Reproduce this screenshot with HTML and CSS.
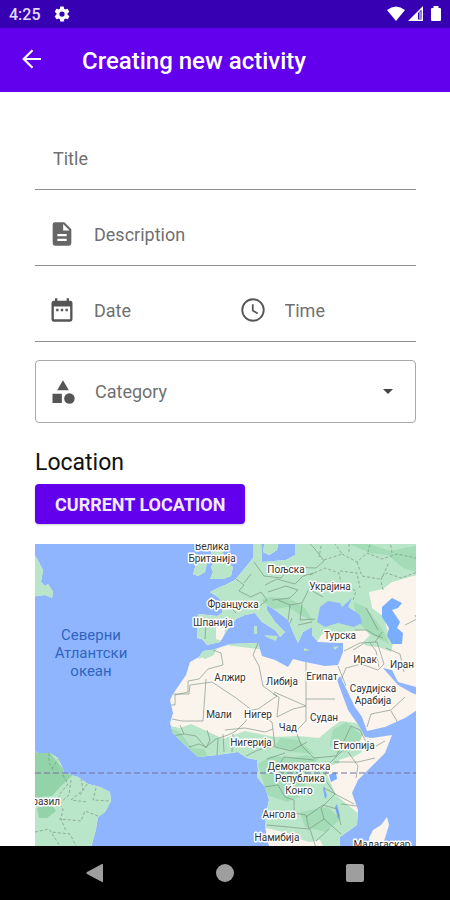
FILE: index.html
```html
<!DOCTYPE html>
<html lang="en">
<head>
    <meta charset="UTF-8">
    <meta name="viewport" content="width=device-width, initial-scale=1.0">
    <title>Creating new activity</title>
    <link rel="stylesheet" href="styles.css">
</head>
<body>

    <div class="status-bar">
        <span class="clock">4:25</span>
        <svg class="gear" viewBox="0 0 24 24" width="18" height="18"><path fill="#fff" d="M19.4 13a7.500 7.500 0 0 0 0-2l2.100-1.600c.2-.2.3-.4.1-.7l-2-3.400c-.1-.2-.4-.3-.6-.2l-2.500 1a7.300 7.300 0 0 0-1.700-1l-.4-2.600A.5.5 0 0 0 14 2h-4a.5.5 0 0 0-.5.4L9.200 5.100c-.6.2-1.200.6-1.700 1L5 5.100c-.2-.1-.5 0-.6.2l-2 3.400c-.1.300-.1.500.1.700L4.600 11a8 8 0 0 0 0 2l-2.100 1.600c-.2.200-.2.400-.1.700l2 3.400c.1.200.4.300.6.200l2.500-1c.5.400 1.100.7 1.700 1l.4 2.600c0 .3.2.5.5.5h4c.2 0 .5-.2.5-.4l.4-2.700c.6-.2 1.200-.6 1.700-1l2.500 1c.2.1.5 0 .6-.2l2-3.400c.1-.2.1-.5-.1-.7zM12 15.500a3.500 3.500 0 1 1 0-7 3.500 3.500 0 0 1 0 7z"/></svg>
        <div class="status-icons">
            <svg viewBox="0 0 18 16" width="18" height="16"><path fill="#fff" d="M0 4Q9-3 18 4L9 15z"/></svg>
            <svg viewBox="0 0 16 16" width="16" height="16"><path fill="#fff" fill-rule="evenodd" d="M0 15L15 0v15zM10 7v6.500h3.500V3.500z"/><path fill="#fff" d="M11.500 5.500h1V13h-1z"/></svg>
            <svg viewBox="0 0 12 16" width="12" height="16"><path fill="#fff" d="M3.500 0h5v2H10q1 0 1 1v11q0 1-1 1H2q-1 0-1-1V3q0-1 1-1h1.500z"/></svg>
        </div>
    </div>

    <header class="app-bar">
        <button class="back" type="button" aria-label="Back">
            <svg viewBox="0 0 20 20" width="20" height="20"><path fill="none" stroke="#fff" stroke-width="2.200" d="M19 10H2M10.500 1.200L1.700 10l8.800 8.800"/></svg>
        </button>
        <h1>Creating new activity</h1>
    </header>

    <main>
        <form class="activity-form">
            <div class="row">
                <label class="field">
                    <input type="text" placeholder="Title" aria-label="Title">
                </label>
            </div>
            <div class="row">
                <label class="field">
                    <svg viewBox="0 0 24 24" width="28" height="28"><path fill="#666" d="M14 2H6a2 2 0 0 0-2 2v16c0 1.100.9 2 2 2h12a2 2 0 0 0 2-2V8zm2 16H8v-2h8zm0-4H8v-2h8zm-3-5V3.500L18.500 9z"/></svg>
                    <input type="text" placeholder="Description" aria-label="Description">
                </label>
            </div>
            <div class="row">
                <label class="field">
                    <svg viewBox="0 0 24 24" width="28" height="28"><path fill="#555" d="M9 11H7v2h2zm4 0h-2v2h2zm4 0h-2v2h2zm2-7h-1V2h-2v2H8V2H6v2H5c-1.100 0-2 .9-2 2v14c0 1.100.9 2 2 2h14a2 2 0 0 0 2-2V6a2 2 0 0 0-2-2zm0 16H5V9h14z"/></svg>
                    <input type="text" placeholder="Date" aria-label="Date">
                </label>
                <label class="field">
                    <svg viewBox="0 0 24 24" width="28" height="28"><circle cx="12" cy="12" r="9.200" fill="none" stroke="#555" stroke-width="1.600"/><path fill="none" stroke="#555" stroke-width="1.500" d="M11.800 7v5.500l4.200 2.500"/></svg>
                    <input type="text" placeholder="Time" aria-label="Time">
                </label>
            </div>
            <label class="field outlined">
                <svg viewBox="0 0 24 24" width="28" height="28"><path fill="#555" d="M12 2l5 8.500H7zM3 13.500h8v8H3z"/><circle cx="17.500" cy="17.500" r="4.500" fill="#555"/></svg>
                <select aria-label="Category">
                    <option>Category</option>
                </select>
                <svg class="arrow" viewBox="0 0 12 6" width="12" height="6"><path fill="#444" d="M1 0h10L6 5z"/></svg>
            </label>

            <h2>Location</h2>
            <button class="location-btn" type="button">CURRENT LOCATION</button>
        </form>

        <svg class="map" viewBox="35 544 381 302" preserveAspectRatio="xMinYMin slice">
            <defs>
                <path id="land" d="
                    M30 552L36 557 43 570 41 582 45 586 48 584 53 592 52 598 45 595 30 597z
                    M30 748L38 753 50 753 58 758 63 769 64 773 78 777 88 784 100 787 110 792 111 801 105 812 98 817 96 829 91 848H30z
                    M193 574l3-10 7-4 4 3-2 9-7 4z
                    M210 579l3-7-2-5 3-6-3-6 1-14h9l2 12 5 10 5 4-2 9-8 3z
                    M253 540L253 558 245 568 235 580 225 585 220 587 210 592 219 598 223 604 222 613 217 616 198 614 197 638 202 639 207 645 220 642 226 632 236 619 245 615 255 613 262 622 275 630 280 637 285 632 275 622 267 610 267 605 275 610 288 620 293 632 298 643 303 632 312 627 312 635 318 642 343 643 343 652 338 665 325 666 305 662 293 659 288 667 275 660 262 656 258 643 230 644 212 650 203 651 199 657 190 662 186 675 173 694 170 700 173 713 170 723 173 733 183 743 198 757 217 755 238 752 247 758 257 760 258 770 257 777 265 787 269 800 265 817 265 827 270 850 340 850 340 837 357 825 358 810 352 793 358 780 375 763 385 753 392 735 372 738 365 737 357 723 348 710 337 680 340 676 355 707 362 717 367 731 385 727 405 718 420 708 420 696 412 693 398 685 383 668 392 670 398 682 420 688 420 540 295 540 295 555 286 560 262 562 261 540z
                    M370 848l-1-10 4-8 8-5 6-8 2 8-4 13-4 11z
                    M265 540h14l-2 10-8 5-6-3z"/>
                <clipPath id="land-clip"><use href="#land"/></clipPath>
            </defs>
            <rect x="35" y="544" width="381" height="302" fill="#8fb5ff"/>
            <use href="#land" fill="#faf4ec"/>

            <!-- vegetation -->
            <g clip-path="url(#land-clip)">
                <path fill="#b9e5c8" d="M30 540h30v65H30zM30 745h90v105H30zM190 540h230v34l-28 8-9 7-14 3 3 16 12 9 5 20 4 6-2 9-12-5-12-1-10-6-20-3-12-2-6 7-8-2-1 15-85-10-26 14z"/>
                <path fill="#faf4ec" d="M216 625l9 4-1 13-8-3zM322 634l43-4 5 5-8 8-45-1z"/>
                <path fill="#b9e5c8" d="M200 656l10-6 6-1-2 6-9 4zM257 642l5 3-2 5zM165 725l15 3 11-4 20 9 12 6 22-8 30 6 22-1 22 2 13-11 9-6 15 2 11 9-10 8 5 12-15 9-15 4-5 10 9 20 24 20-5 45h-25l-10-20-10 2-18-5-40-4z"/>
                <path fill="#93d3a9" d="M30 748l20 5 12 15 11 7-13 12-8 9-22 2zM37 808l14-4 5 7-9 7h-8z"/>
                <path fill="#a3dcb6" d="M168 728l12 4 12 16 12 1 4 8-13 2-25-24zM258 764l13-8 20 2 15-3 13 3-12 16-4 21-16 7-20-7zM333 730l13-8 16 13-4 13-20 6-8-9zM300 812l27-5 14 12-16 13-20-5z"/>
                <path fill="#a3dcb6" d="M261 600l9-3 20 2 14 8 10 15-12-6-14-9-15 2zM280 738l19 2 15 14-19-2-20-5zM354 602l13 6 17 24 5 12-19-10-14-14zM340 540l30 4 20 7 30-6v28l-17-5-15-13-18-2z"/>
                <path fill="#faf4ec" d="M339 760l12-4 6 6-9 14-7-2zM266 828l22 5 12 20h-34zM375 831l6-2 1 9-5 1zM341 790l4-2 1 5-4 2z"/>
            </g>

            <!-- seas and lakes -->
            <path fill="#8fb5ff" d="M317 622l3-15 8-6 12 2 2 4 10-9-4 9 12 8 2 8-8 4-16-4-13 4z"/>
            <path fill="#79adff" d="M382 607l10-9 10 5-4 5-6 2 8 12-3 6 6 5-1 11h-10l-5-8 2-8-7-11zM329 775l7-3 1 7-6 3zM324 786l3 10-2 3-2-10zM337 804l3 12-2 3-3-12z"/>
            <path fill="#b9e5c8" d="M254 626h3v8h-3zM265 635l13 1-2 5-10-4zM304 648l6 2-6 1zM333 647l6-1-4 4z"/>

            <!-- country borders -->
            <g class="borders" clip-path="url(#land-clip)">
                <path d="M213 650l8 3 2 12-15 4-9 10-11 2M173 694h16l1-9 22-3 24 16 21 16M188 681v11l-13 3v10h-4M206 679l-3 42h-21l-10-2M258 643l-5 12 6 11 4 20 14 10-19 13-13 2 1 10-10 10-8 4-12 4-10 8-7-3-10 3M306 662v44l-32-14M306 699h29M257 714l15 8 3 24-17 4-12 6M225 730l20-2 20 4 8-3M206 748l4-8-3-10M217 755l1-16M224 752l-1-18M232 752l1-18M180 725l4 9-12 2M184 734l12 2 10 12"/>
                <path d="M273 694l6 3-2 20 16-8 13-3v15l-10 10 5 14 13 13 22-2 7-13 8-17 9 4 6 12M275 747l16 4 16-9M267 759l18-6M267 770l11-3 6-10 30 3M263 787l15-2 7 12 9 3v13l-29-1M294 813l12 2 3 14-42-4M309 829l15-10-3-11 14-14-11-16 5-14 13-13M324 788l30 16M324 819l17 15M306 817l17-12 14 4 4 16M310 829l6 19M334 762h24l17-4M348 752l10 14-2 12M385 741l-16 9-10-2M341 804l16 2M329 829l-13 12"/>
                <path d="M344 651l16-8 17-1 7 22-6 6-17-6-15 4-5 12M370 643l6 8 3 16M353 650l10-6M338 666l8 20M367 727l4-13 20-4 14-13M391 711l7 12M386 648l14 6 4 18M366 608l12 22M355 630l12 0 8 5 8 3M375 642l7-10"/>
                <path d="M236 579l8 6-5 6 12 6 10-5 6 8-12 10M224 600l12 13M201 620l5 1-1 18M244 583l7-9M254 562l10 14 17 2 10-11 25 1 8-7-9-12-8-8M265 585l12-6 18 5 8-8 11-3M268 592l18-6 12 4-8 8-18 2M278 600l12 5 12-2 7-14 14 8M290 605l-2 16M302 604l-2 16 15-1M292 618l-5 12M298 625l14-3"/>
                <path stroke-dasharray="3 2" d="M310 575l15-7 14 5 2 10 15 8-3 9M324 560l18-6-9-13M342 554l15 8 10-9 15 6 15-5 23 5M357 562l5 14 17 3 8-6 14 5 19-7M383 590l-2-9M349 544v10M371 540l-3 12M390 540l2 13M381 580l8-18M340 571l17 2 3 15M322 541l-3 16"/>
                <path d="M405 625l12-6-2-4"/>
                <path stroke-dasharray="3 2" d="M63 775l5 9-8 10-3 8 6 7-2 10 5 12M71 780l-2 15-9 8M81 778l2 12-12 10 16 2M87 784l-7 11M96 788l-3 12 17 1M98 816l-13-5-4 10-22-2M35 832l14-3 11 17M77 848l-7-14-19-2M49 753v10l5 8M59 758l-8 12"/>
            </g>
            <path class="equator" d="M35 773h381"/>

            <g class="ocean">
                <text x="91" y="640">Северни</text>
                <text x="91" y="658">Атлантски</text>
                <text x="91" y="676">океан</text>
            </g>
            <g class="countries">
                <text x="212" y="550">Велика</text>
                <text x="212" y="562">Британија</text>
                <text x="286" y="573">Пољска</text>
                <text x="330" y="590">Украјина</text>
                <text x="233" y="608">Француска</text>
                <text x="213" y="626">Шпанија</text>
                <text x="340" y="639">Турска</text>
                <text x="365" y="663">Ирак</text>
                <text x="402" y="668">Иран</text>
                <text x="230" y="681">Алжир</text>
                <text x="282" y="685">Либија</text>
                <text x="322" y="680">Египат</text>
                <text x="373" y="692">Саудијска</text>
                <text x="373" y="704">Арабија</text>
                <text x="219" y="718">Мали</text>
                <text x="258" y="718">Нигер</text>
                <text x="324" y="721">Судан</text>
                <text x="288" y="731">Чад</text>
                <text x="251" y="746">Нигерија</text>
                <text x="354" y="749">Етиопија</text>
                <text x="299" y="770">Демократска</text>
                <text x="300" y="782">Република</text>
                <text x="299" y="794">Конго</text>
                <text x="279" y="818">Ангола</text>
                <text x="277" y="841">Намибија</text>
                <text x="382" y="848">Мадагаскар</text>
                <text x="43" y="805">Бразил</text>
            </g>
        </svg>
    </main>

    <nav class="nav-bar">
        <button type="button" aria-label="Back"><svg viewBox="0 0 20 20" width="20" height="20"><path fill="#9e9e9e" d="M17 1q1-.5 1 1v16q0 1.500-1 1L2 11q-1.200-1 0-2z"/></svg></button>
        <button type="button" aria-label="Home"><svg viewBox="0 0 20 20" width="20" height="20"><circle cx="10" cy="10" r="9" fill="#9e9e9e"/></svg></button>
        <button type="button" aria-label="Recent apps"><svg viewBox="0 0 20 20" width="20" height="20"><rect x="1" y="1" width="18" height="18" rx="2" fill="#9e9e9e"/></svg></button>
    </nav>

</body>
</html>
```

FILE: styles.css
```css
* { box-sizing: border-box; }

body {
    margin: 0;
    height: 100vh;
    display: flex;
    flex-direction: column;
    background: #fff;
    font-family: Roboto, "Noto Sans", sans-serif;
}

svg { display: block; flex-shrink: 0; }
button { border: none; cursor: pointer; font-family: inherit; }

/* System status bar */
.status-bar {
    height: 28px;
    flex-shrink: 0;
    display: flex;
    align-items: center;
    gap: 12px;
    padding: 0 8px 0 9px;
    background: #3700b3;
    color: #e4dcff;
}
.clock { font-size: 16px; font-weight: 500; }
.status-icons { display: flex; gap: 2px; margin-left: auto; }
.status-icons svg:first-child { margin-right: 1px; }
.status-icons svg:last-child { margin-left: 4px; }

/* App bar */
.app-bar {
    height: 64px;
    flex-shrink: 0;
    display: flex;
    align-items: center;
    gap: 40px;
    padding: 2px 22px 0;
    background: #6200ee;
    color: #fff;
}
.back { padding: 0; background: none; margin-bottom: 4px; }
h1 { margin: 0; font-size: 24px; font-weight: 500; }

main {
    flex: 1;
    min-height: 0;
    display: flex;
    flex-direction: column;
    padding: 35px 34px 0 35px;
}
.activity-form { flex-shrink: 0; }

/* Form fields */
.row {
    display: flex;
    height: 63px;
    margin-bottom: 13px;
    border-bottom: 1px solid #8f8f8f;
}
.field {
    flex: 1;
    min-width: 0;
    display: flex;
    align-items: center;
    gap: 18px;
    padding: 0 13px;
}
.row:first-child .field { padding-left: 18px; }
.field input, .field select {
    flex: 1;
    min-width: 0;
    height: 100%;
    padding: 0;
    border: none;
    outline: none;
    background: none;
    appearance: none;
    font-family: inherit;
    font-size: 18px;
    color: #707070;
}
.field input::placeholder { color: #707070; }
.outlined {
    height: 63px;
    margin-top: 18px;
    border: 1px solid #a8a8a8;
    border-radius: 4px;
}
.outlined .arrow { margin-right: 8px; }

h2 {
    margin: 26px 0 8px;
    font-size: 23px;
    line-height: 27px;
    font-weight: 400;
    color: #111;
}
.location-btn {
    height: 40px;
    padding: 0 20px;
    border-radius: 4px;
    background: #6200ee;
    color: #f1e9ff;
    font-size: 18px;
    font-weight: 700;
    box-shadow: 0 1px 2px rgba(0, 0, 0, 0.2);
}

/* Map */
.map {
    flex: 1;
    min-height: 0;
    width: 100%;
    margin-top: 20px;
    text-anchor: middle;
}
.borders { fill: none; stroke: #738b7b; stroke-width: 1px; stroke-opacity: 0.6; }
.equator { stroke: #74719e; stroke-width: 1px; stroke-dasharray: 6 3; }
.ocean { font-size: 15px; fill: #2f65bd; }
.countries {
    font-size: 10px;
    fill: #333;
    stroke: #fff;
    stroke-width: 3px;
    stroke-linejoin: round;
    paint-order: stroke;
}

/* System navigation */
.nav-bar {
    height: 54px;
    flex-shrink: 0;
    display: flex;
    justify-content: space-between;
    align-items: center;
    padding: 0 85px;
    background: #000;
}
.nav-bar button { padding: 0; background: none; }
```
